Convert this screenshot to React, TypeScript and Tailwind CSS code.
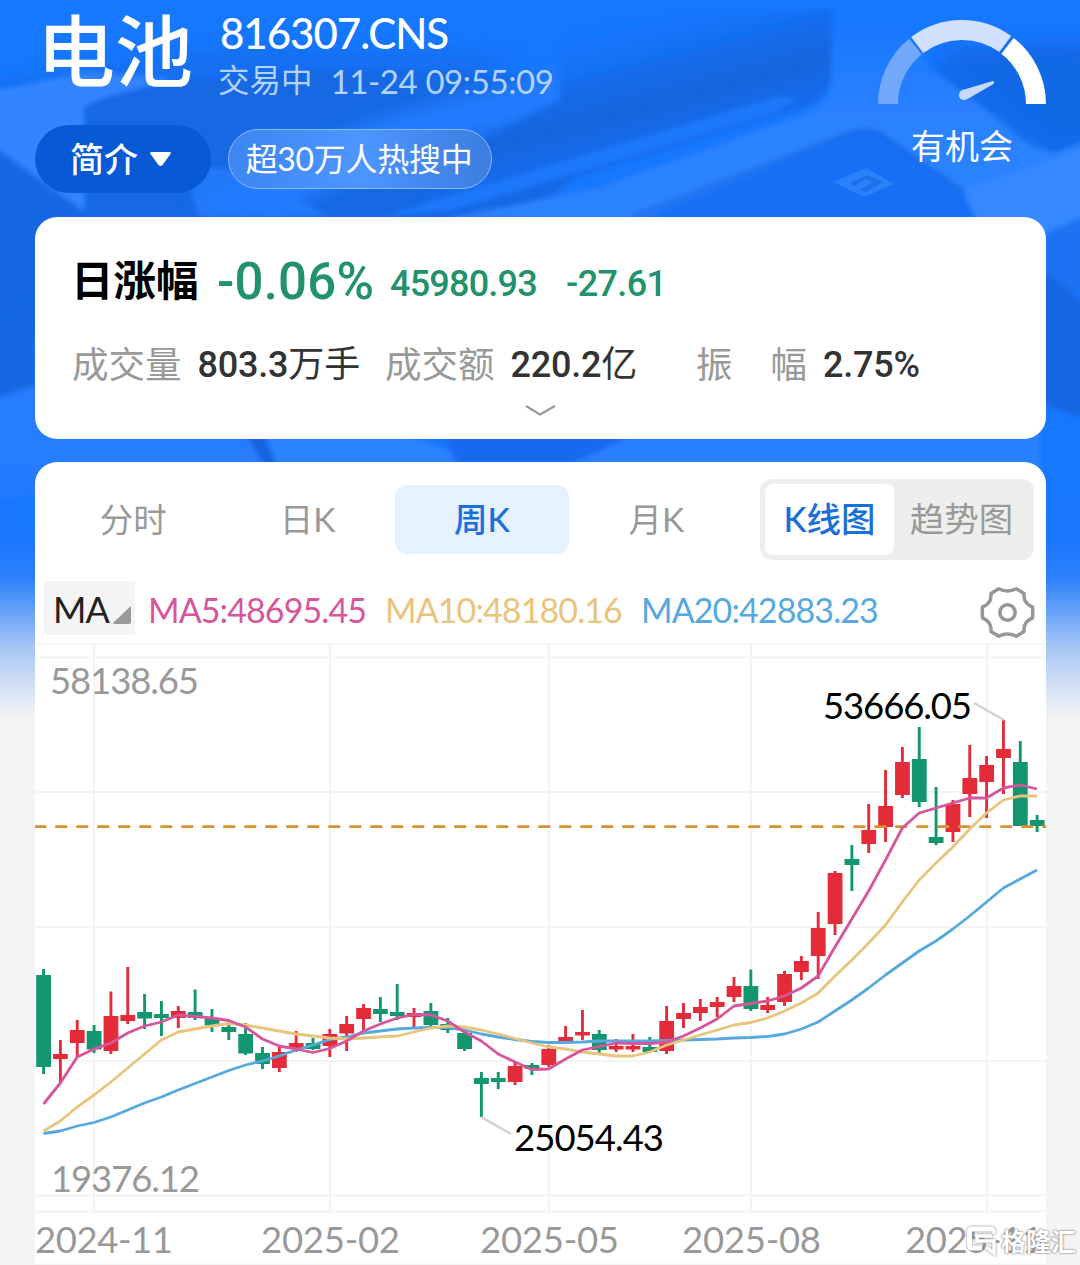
import type { ReactNode } from 'react';
import { clsx } from 'clsx';

// [open/close top, open/close bottom, high, low, rising]
type Candle = [number, number, number, number, 0 | 1];

const UP = '#e32b3a';
const DOWN = '#12966f';

const candles: Candle[] = [
  [975, 1067, 969, 1074, 0],
  [1054, 1059, 1040, 1083, 1],
  [1030, 1043, 1020, 1057, 1],
  [1031, 1049.5, 1025, 1053, 0],
  [1016, 1051, 991.5, 1054, 1],
  [1015, 1021, 967, 1024, 1],
  [1012, 1018.5, 994, 1029, 0],
  [1014, 1018, 1001, 1036, 0],
  [1011, 1018, 1006, 1028, 1],
  [1012, 1018, 989.5, 1020, 0],
  [1019, 1025.5, 1009, 1032, 0],
  [1027, 1032, 1024, 1040, 0],
  [1034, 1053.5, 1023, 1055, 0],
  [1053, 1064, 1047, 1069, 0],
  [1052, 1068, 1047, 1072, 1],
  [1043, 1048, 1031, 1052, 1],
  [1043, 1049, 1038, 1050, 0],
  [1034, 1046, 1029, 1057, 1],
  [1024, 1033.5, 1016, 1051, 1],
  [1008, 1019, 1004, 1030, 1],
  [1009, 1014, 997, 1022, 0],
  [1012, 1016, 984, 1020, 0],
  [1013, 1017, 1008, 1027, 1],
  [1011, 1025, 1003, 1027, 0],
  [1024, 1030, 1018, 1033, 0],
  [1033, 1049, 1031, 1051, 0],
  [1078, 1084, 1072, 1117, 0],
  [1078, 1082, 1072, 1089, 0],
  [1066, 1082, 1061, 1085, 1],
  [1065, 1069, 1063, 1075, 0],
  [1049, 1065, 1045, 1067, 1],
  [1037, 1041, 1026, 1042, 1],
  [1032, 1035.5, 1010, 1040, 1],
  [1034, 1050, 1030, 1053, 0],
  [1046, 1049.5, 1039, 1052, 1],
  [1046, 1049.5, 1034, 1052, 1],
  [1047, 1052, 1037, 1052, 0],
  [1021, 1051, 1006, 1054, 1],
  [1013, 1019, 1003, 1028, 1],
  [1007, 1013, 999, 1021, 1],
  [1002, 1007, 997, 1017, 1],
  [986, 997, 977, 1002, 1],
  [986, 1009, 969.5, 1011, 0],
  [1005, 1010, 997, 1013, 1],
  [974, 1002, 971, 1006, 1],
  [961, 972, 956, 980, 1],
  [928, 956, 912, 979, 1],
  [873, 924, 871, 935, 1],
  [859, 865, 845, 891, 0],
  [830, 844, 804, 853, 1],
  [806, 827, 770, 842, 1],
  [762, 795, 747, 798, 1],
  [759, 802, 727, 807, 0],
  [837, 843, 787, 845, 0],
  [804, 832, 800, 842, 1],
  [778, 794, 745, 817, 1],
  [765, 782, 756, 818, 1],
  [749, 758, 720, 794, 1],
  [762, 826, 741, 826, 0],
  [820, 826, 815, 832, 0],
];

const ma5 = [
  1104, 1083, 1057, 1049, 1043, 1033, 1026, 1022, 1015, 1016.5, 1018, 1020.5, 1027, 1039, 1046,
  1049, 1052.5, 1048.5, 1041, 1031, 1024, 1018, 1014.5, 1015, 1021, 1032, 1041, 1054, 1062, 1069.5,
  1069, 1059, 1050, 1046.5, 1043, 1043.5, 1043.5, 1042, 1036, 1028, 1019, 1006, 1003.5, 1001, 996,
  988, 976, 947, 919, 891, 860, 828, 813, 808, 803, 798, 798, 788, 785, 789,
];

const ma10 = [
  1131, 1121, 1107, 1095, 1082, 1068, 1054, 1040, 1032, 1029, 1026, 1023.5, 1025, 1028, 1031, 1034,
  1036, 1038, 1039, 1038, 1037, 1036, 1032, 1028, 1026, 1027, 1030, 1034, 1038.5, 1043, 1047, 1049,
  1052, 1054, 1056, 1056, 1052, 1045, 1040, 1035, 1030, 1025, 1022.5, 1018, 1011, 1003, 993, 976,
  960, 943, 925, 902, 880, 863, 847, 829, 813, 800, 796, 796,
];

const ma20 = [
  1133.5, 1131, 1126, 1122.5, 1117, 1110, 1103, 1097, 1090, 1083.5, 1077, 1070.5, 1065, 1061, 1056,
  1050, 1045, 1039.5, 1037, 1033, 1031, 1029, 1028, 1027.5, 1027.5, 1030, 1034, 1037, 1039.5, 1041.5,
  1042.5, 1042.5, 1042, 1041, 1041, 1041, 1041, 1040.5, 1040, 1039.5, 1039, 1038, 1037.5, 1036.5,
  1034, 1029, 1022, 1011, 1000, 988, 975, 963, 951, 941, 929, 916, 902, 888, 879, 870,
];

const xAt = (i: number) => 43.5 + i * 16.84;
const toPoints = (values: number[]) => values.map((y, i) => `${xAt(i)},${y}`).join(' ');

const tabs = ['分时', '日K', '周K', '月K'];

function Backdrop() {
  return (
    <svg className="absolute inset-0" width="1080" height="1265" viewBox="0 0 1080 1265">
      <defs>
        <linearGradient id="fade" x1="0" y1="0" x2="0" y2="1">
          <stop offset="0" stopColor="#1677ff" stopOpacity="0" />
          <stop offset="0.3" stopColor="#1b76ff" stopOpacity="1" />
          <stop offset="0.45" stopColor="#2b80fb" />
          <stop offset="0.72" stopColor="#a5c5f5" />
          <stop offset="0.92" stopColor="#e0e8f5" />
          <stop offset="1" stopColor="#f3f3f4" />
        </linearGradient>
        <linearGradient id="slab" gradientUnits="userSpaceOnUse" x1="640" y1="10" x2="670" y2="125">
          <stop offset="0" stopColor="#1677ff" stopOpacity="0" />
          <stop offset="0.5" stopColor="#136bea" />
          <stop offset="0.8" stopColor="#1265dd" />
          <stop offset="1" stopColor="#1369e8" />
        </linearGradient>
        <linearGradient id="gap" gradientUnits="userSpaceOnUse" x1="0" y1="20" x2="0" y2="120">
          <stop offset="0" stopColor="#2c82ff" stopOpacity="0" />
          <stop offset="1" stopColor="#2c82ff" />
        </linearGradient>
        <filter id="soft" x="-10%" y="-10%" width="120%" height="120%">
          <feGaussianBlur stdDeviation="2.5" />
        </filter>
        <filter id="softer" x="-20%" y="-30%" width="140%" height="160%">
          <feGaussianBlur stdDeviation="9" />
        </filter>
      </defs>
      <rect width="1080" height="1265" fill="#f4f4f4" />
      <rect width="1080" height="620" fill="#1677ff" />
      <g filter="url(#softer)">
        <path d="M-30 86 L230 48 L520 56 L420 110 L180 230 L-30 230Z" fill="#146ef0" />
        <path d="M930 50 L1100 40 L1100 140 L1054 150Z" fill="#1469e8" />
      </g>
      <g filter="url(#soft)">
        <path d="M-10 92 L86 72 L170 78 L84 108 L84 216 L-10 146Z" fill="#3185ff" />
        <path d="M-10 143 L92 217 L92 340 L-10 340Z" fill="#1467e2" />
        <path d="M84 108 Q92 98 160 84 L300 70 L560 76 L600 150 L520 230 L198 230 L88 217Z" fill="#1467e3" />
        <path d="M180 165 L200 217 L330 217 L240 170Z" fill="#2379f8" />
      </g>
      <path d="M190 205 L380 118 L640 50 L700 60 L560 118 L400 150 L280 215Z" fill="#217bff" filter="url(#softer)" />
      <g filter="url(#soft)">
        <path d="M560 20 L832 10 L830 84 Q824 98 810 104 L600 170 L440 217 L400 217 L500 130 L560 100Z" fill="url(#slab)" />
        <path d="M600 150 L780 96 L800 100 L770 114 L600 166 L450 210 L380 217Z" fill="#1e78fb" />
        <path d="M440 220 L600 187 L810 112 Q830 100 832 82 L834 10 L900 10 L930 70 L1054 153 L1090 140 L1090 222 L978 222 L960 190 L880 134 L850 134 L638 220Z" fill="url(#gap)" />
        <path d="M960 190 L976 217 L1046 240 L1090 217 L1090 145 L1054 158Z" fill="#3488ff" />
        <path d="M632 222 L850 135 Q866 128 880 134 L964 192 L976 222Z" fill="#166ff5" />
        <path d="M632 217 L850 133 Q866 127 880 133 L964 192" fill="none" stroke="#1264da" strokeWidth="2.5" />
        <path d="M930 65 L1054 50 L1090 60 L1090 138 L1054 153 L1030 146Z" fill="#1368e6" fillOpacity="0.75" />
        <path d="M1030 240 L1090 214 L1090 300 L1030 270Z" fill="#1b72f2" />
        <path d="M1030 268 L1060 282 L1090 310 L1090 420 L1030 400Z" fill="#1366e2" />
        <path d="M-10 340 L30 300 L40 400 L-10 400Z" fill="#1467e2" />
        <path d="M-10 400 L50 380 L246 432 L276 475 L-10 500Z" fill="#267cff" />
        <path d="M244 432 L262 432 L278 470 L268 470Z" fill="#1263dc" />
        <path d="M266 432 L400 432 L500 470 L278 470Z" fill="#2c82ff" />
        <path d="M440 432 L650 432 L570 470 L460 470Z" fill="#146bf0" />
        <path d="M640 432 L1040 432 L1040 470 L560 470Z" fill="#2b81ff" />
      </g>
      <path d="M833 182 L866 168 L894 184 L864 197Z" fill="#3086fc" fillOpacity="0.8" />
      <path d="M850 183 L868 175 L882 182 L866 192 L860 190 L873 182 L866 179 L854 186Z" fill="#1a68de" fillOpacity="0.7" />
      <rect y="462" width="1080" height="256" fill="url(#fade)" />
    </svg>
  );
}

function Gauge() {
  return (
    <svg width="168" height="88" viewBox="877 18 168 88" fill="none">
      <path d="M887 104 A74 74 0 0 1 914.4 46.5" stroke="#73a9fc" strokeWidth="20" />
      <path d="M916.2 45 A74 74 0 0 1 1004.3 44" stroke="#d1e0fd" strokeWidth="20" />
      <path d="M1006.5 45.8 A74 74 0 0 1 1035 104" stroke="#fff" strokeWidth="20" />
      <path d="M960.5 90.3 L992 81 Q994.5 82.5 992 84.2 L966.5 99 Q960 102 958 96 Q958 92 960.5 90.3Z" fill="#c7dafc" />
    </svg>
  );
}

function GearIcon() {
  return (
    <svg className="mt-[5px]" width="55" height="55" viewBox="0 0 56 56" fill="none" stroke="#979797" strokeWidth="3.6" strokeLinejoin="round">
      <path d="M19 3.8 Q28 8.4 37 3.8 L44.8 8.6 Q44 19 53.4 22.4 Q54 28 53.4 33.6 Q44 37 44.8 47.4 L37 52.2 Q28 47.6 19 52.2 L11.2 47.4 Q12 37 2.6 33.6 Q2 28 2.6 22.4 Q12 19 11.2 8.6Z" />
      <circle cx="28" cy="28" r="7.8" />
    </svg>
  );
}

function Stat({ label, value, unit }: { label: ReactNode; value: string; unit?: string }) {
  return (
    <div className="flex items-center whitespace-nowrap">
      <span className="text-[36.5px] text-[#999]">{label}</span>
      <span className="ml-4 mt-[2px] font-['Roboto','Noto_Sans_CJK_SC',sans-serif] text-[36px] font-medium tracking-[-0.2px] text-[#333]">
        {value}
        <span className="font-normal">{unit}</span>
      </span>
    </div>
  );
}

function Chart() {
  return (
    <svg
      width="1011"
      height="622"
      viewBox="35 643 1011 622"
      className="block font-['Lato','Noto_Sans_CJK_SC',sans-serif] text-[36.5px]"
    >
      <g stroke="#f4f4f4" strokeWidth="2">
        {[643.5, 657.5, 792, 927, 1061, 1195.5, 1211.5, 1264.5].map((y) => (
          <line key={y} x1="35" x2="1046" y1={y} y2={y} />
        ))}
        {[94, 330, 549, 751, 987].map((x) => (
          <line key={x} x1={x} x2={x} y1="643" y2="1214" />
        ))}
      </g>

      <g fill="#999">
        <text x="50" y="693.5" textLength="149">58138.65</text>
        <text x="51" y="1191.5" textLength="149">19376.12</text>
        <text x="35" y="1252.5" textLength="138">2024-11</text>
        <text x="261" y="1252.5" textLength="139">2025-02</text>
        <text x="480" y="1252.5" textLength="139">2025-05</text>
        <text x="682" y="1252.5" textLength="139">2025-08</text>
        <text x="905" y="1252.5" textLength="138">2025-11</text>
      </g>

      {candles.map(([top, bottom, high, low, up], i) => (
        <g key={i} fill={up ? UP : DOWN}>
          <rect x={xAt(i) - 1.4} y={high} width="2.9" height={low - high} />
          <rect x={xAt(i) - 7.3} y={top} width="14.8" height={bottom - top} />
        </g>
      ))}

      <line x1="34.3" x2="1046" y1="826.7" y2="826.7" stroke="#d8922d" strokeWidth="2.8" strokeDasharray="12 9" />

      <g fill="none" strokeWidth="2.8" strokeLinejoin="round">
        <polyline points={toPoints(ma20)} stroke="#56a9de" />
        <polyline points={toPoints(ma10)} stroke="#e9c47c" />
        <polyline points={toPoints(ma5)} stroke="#d6559b" />
      </g>

      <g stroke="#d2d2d2" strokeWidth="2.5">
        <line x1="974" y1="703" x2="1004" y2="720" />
        <line x1="481" y1="1117" x2="511" y2="1134" />
      </g>
      <g fill="#000">
        <text x="823" y="718.5" textLength="149">53666.05</text>
        <text x="514" y="1150.5" textLength="150">25054.43</text>
      </g>
    </svg>
  );
}

function Watermark() {
  return (
    <div className="absolute left-[966px] top-[1225px] flex items-center gap-1 text-white">
      <svg width="31" height="33" viewBox="0 0 31 33" fill="none" className="drop-shadow-[0_0_1px_#777]">
        <path d="M28 4H6Q3.500 4 3.500 7V20Q3.500 23 6 23H16" stroke="#fff" strokeWidth="5" />
        <path d="M28 4V9M26 11H11V16H28V28L20 22" stroke="#fff" strokeWidth="3.5" />
      </svg>
      <span className="text-[25px] font-bold leading-none [text-shadow:0_0_2px_#777,0_0_2px_#999]">格隆汇</span>
    </div>
  );
}

export default function App() {
  return (
    <div className="relative h-[1265px] w-[1080px] overflow-hidden font-['Lato','Noto_Sans_CJK_SC',sans-serif] leading-none">
      <Backdrop />

      <div className="relative pl-[35px] pr-[34px]">
        {/* Header */}
        <header className="flex h-[217px] justify-between text-white">
          <div>
            <div className="flex h-[125px]">
              <h1 className="ml-[2px] mt-[12px] w-[183px] whitespace-nowrap text-[78px] font-medium">电池</h1>
              <div className="pt-[12px]">
                <p className="text-[42px] font-medium tracking-[-1px]">816307.CNS</p>
                <p className="-ml-[2px] mt-[11px] flex gap-[18px] whitespace-nowrap text-[31.5px] text-[#b3d3ff]">
                  <span>交易中</span>
                  <span className="text-[33px] tracking-[-0.4px]">11-24 09:55:09</span>
                </p>
              </div>
            </div>
            <div className="flex items-center gap-[17px]">
              <button className="flex h-[68px] w-[176px] items-center justify-center gap-[11px] rounded-full bg-[#075ad3] pr-[4px] text-[34px] font-medium">
                简介
                <svg width="23" height="16" viewBox="0 0 22 16" fill="#fff">
                  <path d="M2 1 H20 Q22 1 21 3 L13 14 Q11 16 9 14 L1 3 Q0 1 2 1Z" />
                </svg>
              </button>
              <div className="flex h-[60px] w-[264px] items-center justify-center whitespace-nowrap rounded-full border-[1.5px] border-[#8bbaff] bg-linear-to-r from-[#3d86f2] via-[#4d95ff] to-[#3d7de0] pr-[2px] text-[32px] tracking-[-0.3px]">
                超30万人热搜中
              </div>
            </div>
          </div>
          <div className="flex flex-col items-center pt-[18px]">
            <Gauge />
            <span className="mt-[23px] text-[34px]">有机会</span>
          </div>
        </header>

        {/* Quote summary */}
        <section className="flex h-[222px] flex-col rounded-[22px] bg-white pl-[37px]">
          <div className="mt-[39px] flex h-[50px] items-center whitespace-nowrap font-['Roboto','Noto_Sans_CJK_SC',sans-serif] font-medium text-[#22916d]">
            <span className="-ml-px mt-[2px] w-[146px] text-[42.5px] font-bold text-black">日涨幅</span>
            <span className="w-[173px] text-[51px] tracking-[0.2px]">-0.06%</span>
            <span className="mt-[6px] w-[176px] text-[36px] tracking-[-0.8px]">45980.93</span>
            <span className="mt-[6px] text-[36px] tracking-[-0.6px]">-27.61</span>
          </div>
          <div className="mt-[38px] flex h-[40px] items-center">
            <div className="w-[313px]"><Stat label="成交量" value="803.3" unit="万手" /></div>
            <div className="w-[311px]"><Stat label="成交额" value="220.2" unit="亿" /></div>
            <Stat label={<>振<span className="ml-[38px]">幅</span></>} value="2.75%" />
          </div>
          <svg className="ml-[452px] mt-[20px]" width="32" height="14" viewBox="0 0 32 14" fill="none" stroke="#999" strokeWidth="2.2">
            <path d="M2 2 L16 10.500 L31 2" />
          </svg>
        </section>

        {/* K-line card */}
        <section className="mt-[23px] h-[803px] rounded-t-[22px] bg-white">
          <div className="flex h-[115px] items-center justify-between pl-[11px] pr-3">
            <div className="flex">
              {tabs.map((tab) => (
                <div
                  key={tab}
                  className={clsx(
                    'flex h-[69px] w-[174.4px] items-center justify-center rounded-xl text-[33.5px]',
                    tab === '周K' ? 'bg-[#e6f1fe] font-medium text-[#1a6fd8]' : 'text-[#999]',
                  )}
                >
                  {tab}
                </div>
              ))}
            </div>
            <div className="flex h-[81px] w-[274px] items-center rounded-xl bg-[#eeeeec] p-[5px] text-[34.5px]">
              <div className="flex h-full w-[129px] items-center justify-center rounded-lg bg-white font-medium text-[#1a6fd8]">
                K线图
              </div>
              <div className="flex flex-1 items-center justify-center text-[#999]">趋势图</div>
            </div>
          </div>

          <div className="flex h-[66px] items-center whitespace-nowrap pl-[9px] text-[34px] tracking-[-0.9px]">
            <div className="mb-[5px] flex h-[54px] w-[91px] items-center bg-[#f4f4f4] pl-[9px] pt-[3px] text-[36px] text-[#222]">
              MA
              <svg className="ml-[4px] mt-[11px]" width="18" height="18" viewBox="0 0 18 18" fill="#999">
                <path d="M18 0 V16 Q18 18 16 18 H1 Q-1 17 1 16Z" />
              </svg>
            </div>
            <span className="ml-[13px] w-[237px] text-[#d6559b]">MA5:48695.45</span>
            <span className="w-[256px] text-[#e9c47c]">MA10:48180.16</span>
            <span className="w-[339px] text-[#56a9de]">MA20:42883.23</span>
            <GearIcon />
          </div>

          <Chart />
        </section>
      </div>

      <Watermark />
    </div>
  );
}
